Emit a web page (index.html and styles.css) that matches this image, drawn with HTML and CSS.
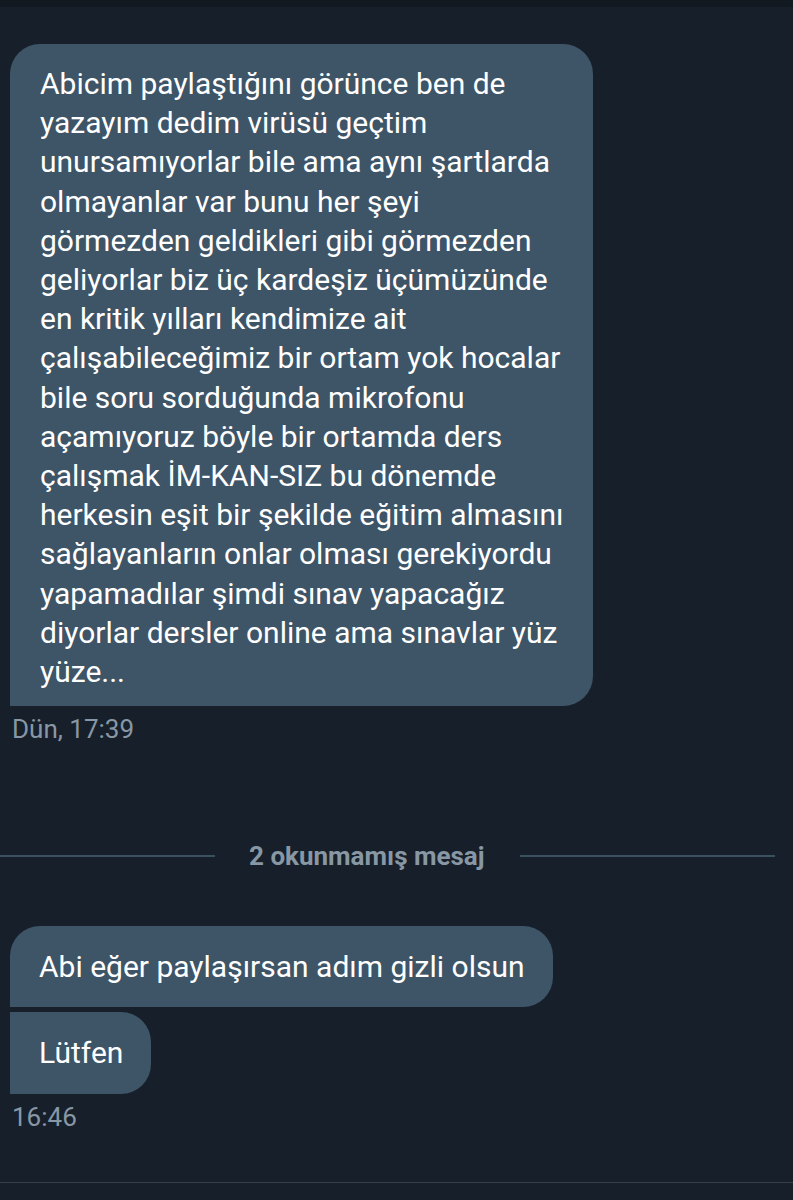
FILE: index.html
```html
<!DOCTYPE html>
<html lang="tr">
<head>
<meta charset="utf-8">
<title>Mesajlar</title>
<link rel="stylesheet" href="styles.css">
</head>
<body>
<div class="topbar"></div>
<main class="thread">
  <div class="group">
    <div class="bubble bubble-big">Abicim paylaştığını görünce ben de<br>yazayım dedim virüsü geçtim<br>unursamıyorlar bile ama aynı şartlarda<br>olmayanlar var bunu her şeyi<br>görmezden geldikleri gibi görmezden<br>geliyorlar biz üç kardeşiz üçümüzünde<br>en kritik yılları kendimize ait<br>çalışabileceğimiz bir ortam yok hocalar<br>bile soru sorduğunda mikrofonu<br>açamıyoruz böyle bir ortamda ders<br>çalışmak İM-KAN-SIZ bu dönemde<br>herkesin eşit bir şekilde eğitim almasını<br>sağlayanların onlar olması gerekiyordu<br>yapamadılar şimdi sınav yapacağız<br>diyorlar dersler online ama sınavlar yüz<br>yüze...</div>
    <div class="time">Dün, 17:39</div>
  </div>

  <div class="divider">
    <span class="rule rule-left"></span>
    <span class="divider-text">2 okunmamış mesaj</span>
    <span class="rule rule-right"></span>
  </div>

  <div class="group group-new">
    <div class="bubble bubble-first">Abi eğer paylaşırsan adım gizli olsun</div>
    <div class="bubble bubble-last">Lütfen</div>
    <div class="time">16:46</div>
  </div>
</main>
<div class="composer-edge"></div>
</body>
</html>
```

FILE: styles.css
```css
html, body {
  margin: 0;
  padding: 0;
  background: #17202a;
}
body {
  width: 793px;
  height: 1200px;
  overflow: hidden;
  font-family: Roboto, "Noto Sans", "Liberation Sans", sans-serif;
  color: #ffffff;
  display: flex;
  flex-direction: column;
}
.topbar {
  height: 7px;
  background: #121921;
  flex: none;
}
.thread {
  flex: 1;
  display: flex;
  flex-direction: column;
  padding: 37px 0 0 0;
}
.group {
  display: flex;
  flex-direction: column;
  align-items: flex-start;
  padding-left: 10px;
}
.bubble {
  background: #3e5467;
  font-size: 30px;
  line-height: 39.2px;
  letter-spacing: 0;
  white-space: nowrap;
}
.bubble-big {
  width: 583px;
  box-sizing: border-box;
  padding: 20px 10px 15px 30px;
  border-radius: 30px 30px 30px 0;
}
.bubble-first {
  padding: 21px 28px 21px 29px;
  border-radius: 30px 30px 30px 0;
}
.bubble-last {
  margin-top: 5px;
  padding: 21px 28px 21px 29px;
  border-radius: 0 30px 30px 0;
}
.time {
  margin-top: 9px;
  margin-left: 2px;
  font-size: 26px;
  line-height: 28px;
  color: #8797a5;
}
.divider {
  display: flex;
  align-items: center;
  margin-top: 98px;
  height: 30px;
}
.rule {
  height: 2px;
  background: #3c4f5f;
  flex: none;
}
.rule-left { width: 215px; margin-right: 34px; }
.rule-right { width: 255px; margin-left: 35px; }
.divider-text {
  font-size: 26px;
  font-weight: 700;
  color: #8897a4;
  white-space: nowrap;
}
.group-new {
  margin-top: 55px;
}
.composer-edge {
  flex: none;
  height: 17px;
  border-top: 1px solid #363f4a;
  background: #17202a;
}
```
